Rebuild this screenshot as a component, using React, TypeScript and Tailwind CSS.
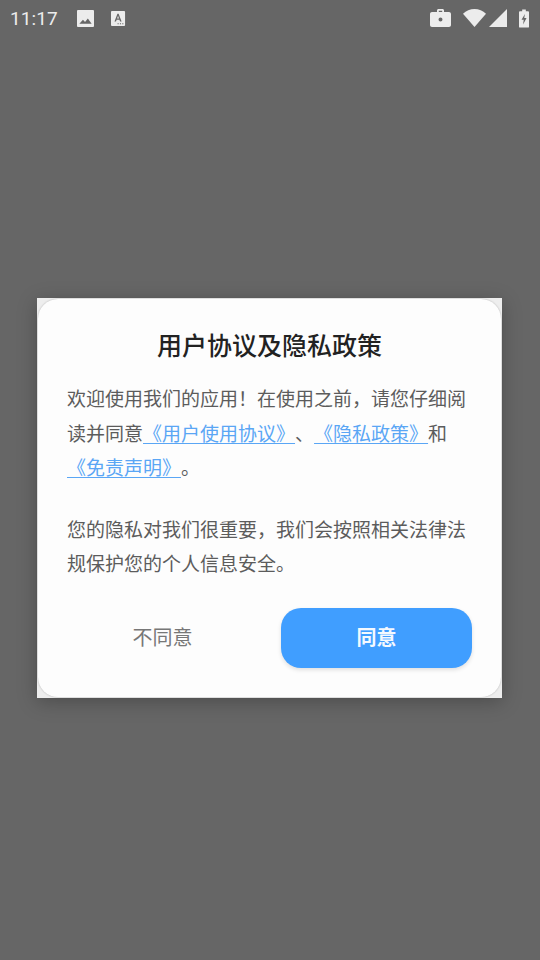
const cjk = "font-['Noto_Sans_CJK_SC','Noto_Sans',sans-serif]";

function StatusBar() {
  return (
    <div className="flex h-9 items-center justify-between pl-[10px] pr-[11px] text-[#ececec]">
      <div className="flex items-center">
        <span className="font-['Roboto',sans-serif] text-[19px] leading-none tracking-[0.1px]">11:17</span>
        {/* picture notification */}
        <svg viewBox="0 0 18 18" className="ml-[19px] h-[17px] w-[17px]" fill="currentColor">
          <path fillRule="evenodd" d="M1 0h16a1 1 0 0 1 1 1v16a1 1 0 0 1-1 1H1a1 1 0 0 1-1-1V1a1 1 0 0 1 1-1zM2.500 14.500h13L11.500 9l-3 3.800L6.300 10.300z" />
        </svg>
        {/* translate notification */}
        <svg viewBox="0 0 16 16" className="ml-[17px] h-[15px] w-[15px]" fill="currentColor">
          <path fillRule="evenodd" d="M1 0h13a1 1 0 0 1 1 1v14a1 1 0 0 1-1 1H1a1 1 0 0 1-1-1V1a1 1 0 0 1 1-1zM6.900 3 3.700 11.200h1.600l.7-1.900h3l.7 1.900h1.600L8.100 3zM6.500 8l1-2.900 1 2.900zM7 13h1.200v1.200H7zM9.500 13h1.200v1.200H9.500zM12 13h1.200v1.200H12z" />
        </svg>
      </div>
      <div className="flex items-center">
        {/* work profile */}
        <svg viewBox="0 0 21 18" className="h-[18px] w-[21px]" fill="currentColor">
          <path fillRule="evenodd" d="M7 3V1.500C7 .7 7.700 0 8.500 0h4c.8 0 1.500.7 1.500 1.500V3h5c1.100 0 2 .9 2 2v11c0 1.100-.9 2-2 2H2c-1.100 0-2-.9-2-2V5c0-1.100.9-2 2-2zM8.800 1.800V3h3.400V1.800zM10.500 8.500a2 2 0 1 0 0 4 2 2 0 0 0 0-4z" />
        </svg>
        {/* wifi */}
        <svg viewBox="0 0 22 17" className="ml-[12px] h-[18px] w-[23px]" fill="currentColor">
          <path d="M0 4.500C3 1.700 6.800 0 11 0s8 1.700 11 4.500L11 17z" />
        </svg>
        {/* signal */}
        <svg viewBox="0 0 18 18" className="ml-[3px] h-[18px] w-[18px]" fill="currentColor">
          <path d="M18 0v18H0z" />
        </svg>
        {/* battery charging */}
        <svg viewBox="0 0 11 20" className="ml-[12px] h-[21px] w-[10px]" fill="currentColor">
          <path fillRule="evenodd" d="M3.500 0h4v2H10a1 1 0 0 1 1 1v16a1 1 0 0 1-1 1H1a1 1 0 0 1-1-1V3a1 1 0 0 1 1-1h2.500zM6.500 5 2.800 11.500h2.400L4.500 16.500l3.800-7H5.800z" />
        </svg>
      </div>
    </div>
  );
}

function PolicyLink({ children }: { children: string }) {
  return <span className="text-[#5aa6f5] underline underline-offset-[2px] decoration-1">{children}</span>;
}

export default function App() {
  return (
    <div className={`flex h-[960px] w-[540px] flex-col overflow-hidden bg-[#666666] [text-spacing-trim:space-all] ${cjk}`}>
      <StatusBar />
      <div className="mt-[262px] ml-[37px] w-[465px] bg-[#eeeeee] shadow-[0_4px_18px_rgba(0,0,0,0.25)]">
        <div className="m-[1px] flex h-[398px] flex-col rounded-[20px] bg-[#fdfdfd] px-[29px] pt-[26px] shadow-[0_0_2px_rgba(0,0,0,0.25)]">
          <h1 className="text-center text-[25px] leading-[38px] font-medium text-[#222222]">用户协议及隐私政策</h1>
          <div className="mt-[18px] text-[19px] leading-[34.500px] text-[#5c5c5c]">
            <p>
              欢迎使用我们的应用！在使用之前，请您仔细阅读并同意
              <PolicyLink>《用户使用协议》</PolicyLink>、<PolicyLink>《隐私政策》</PolicyLink>和<br />
              <PolicyLink>《免责声明》</PolicyLink>。
            </p>
            <p className="mt-[27px]">您的隐私对我们很重要，我们会按照相关法律法规保护您的个人信息安全。</p>
          </div>
          <div className="mt-[27px] flex items-center justify-between">
            <button className="h-[60px] w-[191px] pb-[2px] text-[20px] text-[#777777]">不同意</button>
            <button className="h-[60px] w-[191px] rounded-[20px] bg-[#409eff] pb-[2px] text-[20px] font-bold text-[#f4f9ff] shadow-[0_2px_4px_rgba(0,0,0,0.12)]">
              同意
            </button>
          </div>
        </div>
      </div>
    </div>
  );
}
